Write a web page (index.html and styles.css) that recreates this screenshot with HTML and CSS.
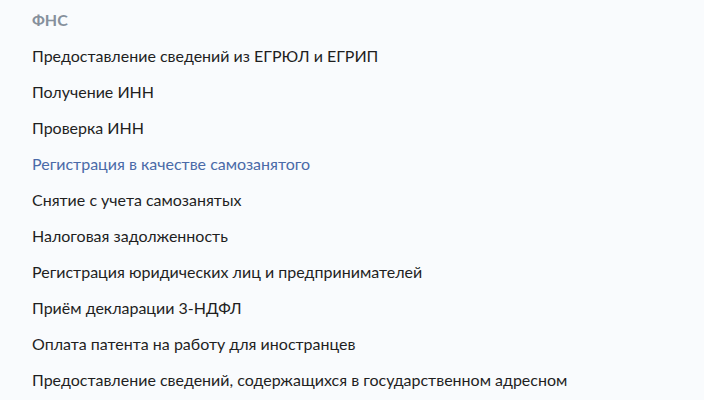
FILE: index.html
```html
<!DOCTYPE html>
<html lang="ru">

<head>
    <meta charset="UTF-8">
    <meta name="viewport" content="width=device-width, initial-scale=1.0">
    <title>ФНС</title>
    <link rel="stylesheet" href="styles.css">
</head>

<body>
    <div class="group">
        <h4 class="group-title">ФНС</h4>
        <ul class="links">
            <li><a href="#">Предоставление сведений из ЕГРЮЛ и ЕГРИП</a></li>
            <li><a href="#">Получение ИНН</a></li>
            <li><a href="#">Проверка ИНН</a></li>
            <li><a href="#" class="active">Регистрация в качестве самозанятого</a></li>
            <li><a href="#">Снятие с учета самозанятых</a></li>
            <li><a href="#">Налоговая задолженность</a></li>
            <li><a href="#">Регистрация юридических лиц и предпринимателей</a></li>
            <li><a href="#">Приём декларации 3-НДФЛ</a></li>
            <li><a href="#">Оплата патента на работу для иностранцев</a></li>
            <li><a href="#">Предоставление сведений, содержащихся в государственном адресном реестре</a></li>
        </ul>
    </div>
</body>

</html>
```

FILE: styles.css
```css
*{
    margin: 0;
    padding: 0;
    box-sizing: border-box;
}
body{
    background-color: #f9fbfd;
    font-family: Lato, "Noto Sans", sans-serif;
    color: #1f1f1f;
}
.group{
    padding: 8px 32px;
    width: 600px;
}
.group-title{
    font-size: 16px;
    line-height: 24px;
    font-weight: 700;
    color: #86909c;
}
.links{
    list-style: none;
}
.links li{
    margin-top: 12px;
    font-size: 16px;
    line-height: 24px;
}
.links a{
    color: #1f1f1f;
    text-decoration: none;
}
.links a.active{
    color: #4a6aa8;
}
```
